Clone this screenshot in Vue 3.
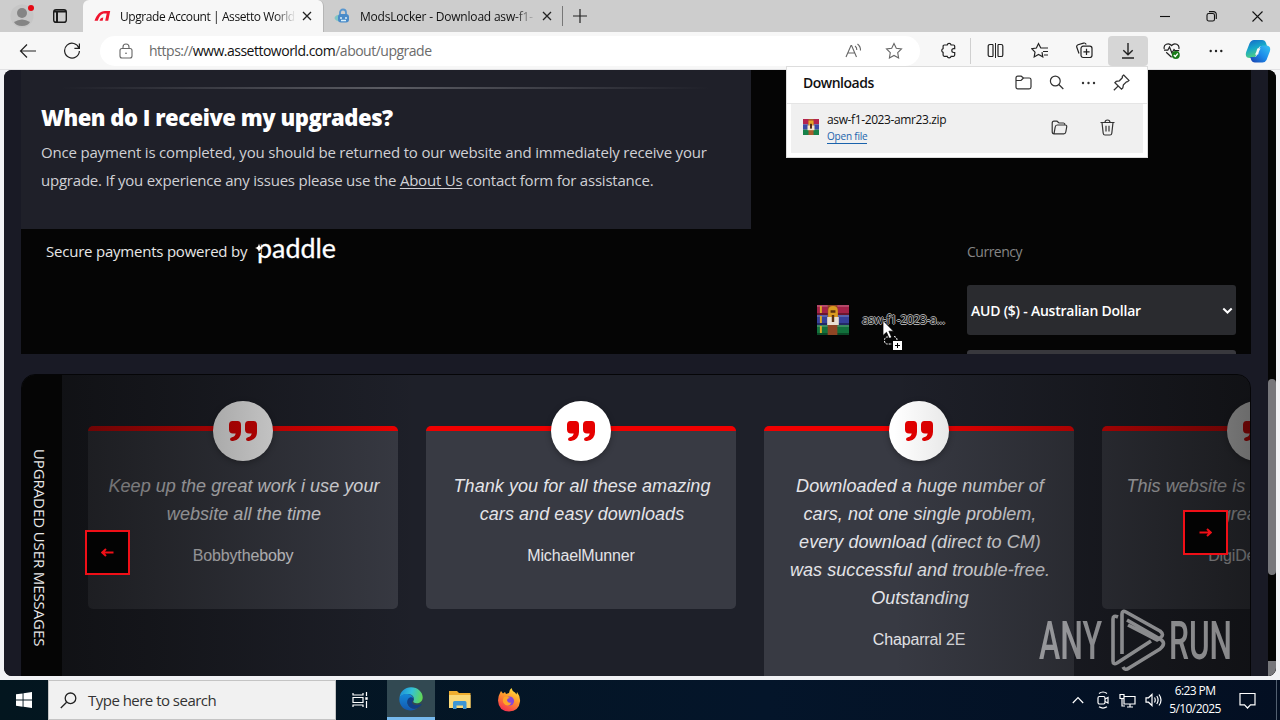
<script setup>
import { ref } from 'vue'

const testimonials = ref([
  { id: 1, lines: ['Keep up the great work i use your', 'website all the time'], name: 'Bobbytheboby' },
  { id: 2, lines: ['Thank you for all these amazing', 'cars and easy downloads'], name: 'MichaelMunner' },
  {
    id: 3,
    lines: [
      'Downloaded a huge number of',
      'cars, not one single problem,',
      'every download (direct to CM)',
      'was successful and trouble-free.',
      'Outstanding',
    ],
    name: 'Chaparral 2E',
  },
  { id: 4, lines: ['This website is the best and very', 'great site'], name: 'DigiDesigners' },
])
</script>

<template>
  <div class="screen">
    <header class="tab-strip">
      <div class="profile">
        <svg width="24" height="26" viewBox="0 0 24 26">
          <circle cx="12" cy="14" r="11.5" fill="#c6c6c6" />
          <circle cx="12" cy="11" r="5" fill="#858585" />
          <path d="M4 20q8-5 16 0q-2 4-8 4t-8-4" fill="#858585" />
        </svg>
        <i class="alert-dot"></i>
      </div>
      <div class="tab-actions">
        <svg width="16" height="16" viewBox="0 0 16 16" fill="none" stroke="#1b1b1b" stroke-width="1.4">
          <rect x="1.7" y="1.7" width="12.6" height="12.6" rx="2.4" />
          <path d="M2 3.5h12M5 4v10" stroke-width="2" />
        </svg>
      </div>
      <div class="tab active">
        <svg class="fav" width="17" height="16" viewBox="0 0 17 16">
          <path d="M.5 12.800C3 6.500 6 3 11 3h5.200l-2 9.800h-3l1.500-7.200h-2C7.500 5.600 5.500 8 3.800 12.800z" fill="#f0152f" />
          <path d="M5.500 12.800q1-3.300 3.800-3.300l-.6 3.300z" fill="#f0152f" />
        </svg>
        <span class="tab-title">Upgrade Account | Assetto World</span>
        <svg class="tab-close" width="10" height="10" viewBox="0 0 10 10"><path d="M1 1l8 8M9 1l-8 8" /></svg>
      </div>
      <div class="tab second">
        <svg class="fav" width="17" height="16" viewBox="0 0 17 16">
          <ellipse cx="7" cy="10" rx="6.5" ry="3.5" fill="#7fc6c5" />
          <path d="M6 7V4.5a3 3 0 0 1 6 0V7" fill="none" stroke="#5796cf" stroke-width="1.8" />
          <rect x="4" y="6" width="11" height="8.5" rx="3" fill="#4a8bc9" />
          <path d="M6 10h2m3 0h2M7 12.5h5" stroke="#d8eefa" stroke-width="1.3" />
        </svg>
        <span class="tab-title">ModsLocker - Download asw-f1-</span>
        <svg class="tab-close" width="10" height="10" viewBox="0 0 10 10"><path d="M1 1l8 8M9 1l-8 8" /></svg>
      </div>
      <div class="new-tab">
        <svg width="14" height="14" viewBox="0 0 14 14"><path d="M7 0v14M0 7h14" stroke="#222" stroke-width="1.2" /></svg>
      </div>
      <div class="window-buttons">
        <svg width="11" height="11" viewBox="0 0 11 11"><path d="M0 5.5h10" /></svg>
        <svg width="11" height="11" viewBox="0 0 11 11"><rect x="1" y="2.5" width="7.5" height="7.5" rx="1.8" /><path d="M3 .6h4.5a2.8 2.8 0 0 1 2.8 2.8V8" /></svg>
        <svg width="11" height="11" viewBox="0 0 11 11"><path d="M.5.5l10 10M10.5.5l-10 10" /></svg>
      </div>
    </header>

    <nav class="toolbar">
      <div class="nav-icon back">
        <svg width="18" height="16" viewBox="0 0 18 16"><path d="M17 8H1.500M8 1.500L1.500 8L8 14.500" /></svg>
      </div>
      <div class="nav-icon reload">
        <svg width="18" height="18" viewBox="0 0 18 18"><path d="M16 6.2A7.4 7.4 0 1 0 16.4 9M16.4 1.5v4.9h-5" /></svg>
      </div>
      <div class="address">
        <svg class="lock" width="14" height="16" viewBox="0 0 14 16"><rect x="1" y="5.5" width="12" height="9.5" rx="2" /><path d="M4 5.5V4a3 3 0 0 1 6 0v1.5" /><circle cx="7" cy="10.3" r=".8" fill="#555" stroke="none" /></svg>
        <span class="url">https://<b>www.assettoworld.com</b>/about/upgrade</span>
        <svg class="read" width="17" height="16" viewBox="0 0 17 16"><path d="M1 14L6 2.5h.6L11.5 14M2.8 10h7M10 3q2 1.5 1.8 4M12.5 1q3.2 2.5 3 6.5" /></svg>
        <svg class="star" width="18" height="18" viewBox="0 0 18 18"><path d="M9 1.5l2.3 4.8 5.2.7-3.8 3.7.9 5.2L9 13.4l-4.6 2.5.9-5.2L1.5 7l5.2-.7z" /></svg>
      </div>
      <div class="nav-icon ext">
        <svg width="17" height="17" viewBox="0 0 17 17"><path d="M4.300 3h2.900a2 2 0 0 1 3.900 0h2.400q1.200 0 1.200 1.200v2.500h-1a1.900 1.900 0 0 0 0 3.800h1v2.600q0 1.200-1.200 1.200h-2.400a2 2 0 0 1-3.900 0H4.300q-1.200 0-1.200-1.200v-2.700a2 2 0 0 1 0-3.800V4.200Q3.100 3 4.300 3z" /></svg>
      </div>
      <i class="tool-sep"></i>
      <div class="nav-icon split">
        <svg width="17" height="15" viewBox="0 0 17 15"><path d="M6 1.500H2.800A1.600 1.600 0 0 0 1.200 3.100v8.800a1.600 1.600 0 0 0 1.600 1.600H6M11 1.500h3.200a1.600 1.600 0 0 1 1.600 1.600v8.800a1.600 1.600 0 0 1-1.600 1.600H11M6 1.500v12M11 1.500v12" /><path d="M8.500 0v15" stroke-width="1" /></svg>
      </div>
      <div class="nav-icon">
        <svg width="18" height="17" viewBox="0 0 18 17"><path d="M11 10.200l.8 4.600-4.300-2.300-4.300 2.400.8-4.800L.8 6.700l4.600-.7 2.100-4.400L9.800 6H17M12 9.500h5M13 13h4" /></svg>
      </div>
      <div class="nav-icon">
        <svg width="18" height="17" viewBox="0 0 18 17"><path d="M4 11.5L1.8 5.3Q1.2 3.5 3 2.800l5.600-1.700q1.800-.5 2.600 1.400" /><rect x="6" y="4.200" width="11" height="11.3" rx="2.200" /><path d="M11.500 6.800v6.200M8.400 9.900h6.200" /></svg>
      </div>
      <div class="nav-icon download">
        <svg width="14" height="16" viewBox="0 0 14 16"><path d="M7 0v11.5M2.300 7.200L7 11.800l4.700-4.600M1 15h12" stroke-width="1.4" /></svg>
      </div>
      <div class="nav-icon health">
        <svg width="18" height="18" viewBox="0 0 18 18"><path d="M1.300 7C0 2.500 5.500 0 8.600 3.500C11.700 0 17 2.500 15.800 7M3.200 10.200l5.400 5M1 8.200h3.800L6.500 5l2.400 6L11 7.500l1 1.200h4.200" /><circle cx="12.800" cy="13" r="4" fill="#187a17" stroke="none" /><path d="M10.800 13l1.500 1.500 2.500-3" stroke="#fff" /></svg>
      </div>
      <div class="nav-icon more">
        <svg width="14" height="4" viewBox="0 0 14 4"><g fill="#222" stroke="none"><circle cx="1.700" cy="2" r="1.200" /><circle cx="7" cy="2" r="1.200" /><circle cx="12.300" cy="2" r="1.200" /></g></svg>
      </div>
      <div class="nav-icon copilot">
        <svg width="26" height="24" viewBox="0 0 26 24">
          <defs>
            <linearGradient id="cop-a" x1="0" y1="0" x2=".4" y2="1"><stop offset="0" stop-color="#1762c8" /><stop offset=".5" stop-color="#16a6ca" /><stop offset="1" stop-color="#55d37c" /></linearGradient>
            <linearGradient id="cop-b" x1="0" y1="1" x2="1" y2="0"><stop offset="0" stop-color="#1a3fae" /><stop offset=".5" stop-color="#1c8bea" /><stop offset="1" stop-color="#37c5f1" /></linearGradient>
          </defs>
          <path d="M9 1h8q3 0 4 3l1 3h-5q-3 0-3.800 2.500L11 16.500Q10 19 7.500 19H5Q-.5 19 1.200 13L4.500 4.500Q6 1 9 1z" fill="url(#cop-a)" stroke="none" />
          <path d="M17.500 6.500H21q5.500 0 3.800 6l-3.300 8.500Q20 23.500 17.500 23.500H10q-3 0-4-3L5.300 18H9q2.500 0 3.300-2.500l2.200-6.500q.8-2.500 3-2.500z" fill="url(#cop-b)" stroke="none" />
          <path d="M12.300 9.500h3.300q-1.200 1.500-1.800 3.500l-.6 2.500H9.800q1-1 1.500-2.800z" fill="#f7f7f7" stroke="none" />
        </svg>
      </div>
    </nav>

    <div class="viewport">
      <main class="page">
        <section class="upgrade">
          <div class="upgrade-left">
            <article class="faq">
              <hr />
              <h2>When do I receive my upgrades?</h2>
              <p class="first">Once payment is completed, you should be returned to our website and immediately receive your</p>
              <p>upgrade. If you experience any issues please use the <a>About Us</a> contact form for assistance.</p>
            </article>
            <div class="secure">
              <span>Secure payments powered by</span>
              <svg width="84" height="32" viewBox="0 0 84 32">
                <text x="2" y="22" textLength="79" lengthAdjust="spacingAndGlyphs" class="paddle">paddle</text>
                <rect x="0" y="5" width="5.800" height="12" fill="#050505" />
                <path d="M4 7.500q.6 4 4.500 4.500q-3.900.5-4.500 4.500q-.6-4-4-4.500q3.400-.5 4-4.500z" fill="#fff" />
              </svg>
            </div>
          </div>
          <aside class="checkout">
            <label>Currency</label>
            <div class="select">
              <span>AUD ($) - Australian Dollar</span>
              <svg width="11" height="8" viewBox="0 0 11 8"><path d="M1.300 1.500l4.200 4 4.200-4" fill="none" stroke="#fff" stroke-width="2" /></svg>
            </div>
            <div class="select next"></div>
          </aside>
        </section>

        <section class="messages">
          <div class="rail"><span>UPGRADED USER MESSAGES</span></div>
          <div class="carousel">
            <div class="track">
              <article v-for="item in testimonials" :key="item.id" class="card">
                <div class="quote">
                  <svg width="30" height="22" viewBox="0 0 30 22" fill="#e60000">
                    <path d="M4.500 1h5Q13 1 13 5v7q0 7.500-8 9-3 .5-3-1.700 0-1.500 2-2 3.200-.8 3.700-3.800H5Q1 13.500 1 9.500V5q0-4 3.500-4zM20.500 1h5Q29 1 29 5v7q0 7.500-8 9-3 .5-3-1.700 0-1.500 2-2 3.200-.8 3.700-3.800H21q-4 0-4-4V5q0-4 3.500-4z" />
                  </svg>
                </div>
                <p v-for="line in item.lines" :key="line" class="line">{{ line }}</p>
                <p class="author">{{ item.name }}</p>
              </article>
            </div>
            <button class="arrow prev"><svg width="13" height="9" viewBox="0 0 13 9"><path d="M12.500 4.500h-11M5 1L1.300 4.500 5 8" /></svg></button>
            <button class="arrow following"><svg width="13" height="9" viewBox="0 0 13 9"><path d="M.5 4.500h11M8 1l3.700 3.500L8 8" /></svg></button>
          </div>
        </section>
      </main>
      <div class="scrollbar"><i class="thumb"></i><i class="corner"></i></div>
    </div>

    <footer class="taskbar">
      <div class="start">
        <svg width="16" height="16" viewBox="0 0 16 16" fill="#fff"><path d="M0 2.300L6.600 1.400v6.200H0zM7.500 1.300L16 0v7.600H7.500zM0 8.500h6.600v6.200L0 13.800zM7.500 8.500H16V16l-8.500-1.200z" /></svg>
      </div>
      <div class="search">
        <svg width="17" height="17" viewBox="0 0 17 17" fill="none" stroke="#222" stroke-width="1.300"><circle cx="10.500" cy="6.300" r="5.300" /><path d="M6.600 10.200L.8 16" /></svg>
        <span>Type here to search</span>
      </div>
      <div class="task">
        <svg width="17" height="16" viewBox="0 0 17 16" fill="none" stroke="#fff" stroke-width="1.200"><path d="M1 1v2h10V1M1 15v-2h10v2M1 5.500h10v5H1zM14.500 0v4M14.500 9v7" /><path d="M13.300 6.500h2.400" stroke-width="2.600" /></svg>
      </div>
      <div class="task edge">
        <svg width="24" height="24" viewBox="0 0 24 24">
          <defs>
            <linearGradient id="edge-a" x1="0" y1=".3" x2="1" y2=".5"><stop offset="0" stop-color="#1c8fd8" /><stop offset=".5" stop-color="#34c1d8" /><stop offset="1" stop-color="#62d854" /></linearGradient>
            <linearGradient id="edge-b" x1="0" y1="0" x2="0" y2="1"><stop offset="0" stop-color="#1488d8" /><stop offset="1" stop-color="#1458b0" /></linearGradient>
          </defs>
          <path d="M.5 11C1 4.500 6 .3 12 .3c7 0 11.700 5 11.700 10 0 4-3 6-6 6-2.500 0-4-1-3.300-2.200C16 11 14 7 9 7 5 7 2 8.500.5 11z" fill="url(#edge-a)" />
          <path d="M.3 12C1 8 5 6.500 8.500 7c4 .3 6.500 3 6 5.500C13 10 8.500 11 8.500 15.500c0 4 4.500 7.800 10 5.500C13 26 .3 23.500.3 12z" fill="url(#edge-b)" />
          <path d="M11 10.500c-3 1-3.500 5-1.500 8 2.700 4 8.500 4.500 12.800-.5.500-.7 0-1.200-.8-.8-4 2-8 .8-8.500-1.700-.3-1.500 1.500-1.600 1.500-3.300 0-1.500-1.800-2.300-3.500-1.700z" fill="#123f87" />
        </svg>
      </div>
      <div class="task explorer">
        <svg width="22" height="20" viewBox="0 0 22 20"><path d="M0 1h8l2 2h11.500v15H0z" fill="#f0ae2f" /><path d="M0 5h21.500v13H0z" fill="#fbd978" /><path d="M4 19v-6.500Q4 11 5.500 11h10.500q1.500 0 1.500 1.500V19h-3.500v-3.500h-6.500V19z" fill="#3e96d4" /></svg>
      </div>
      <div class="task">
        <svg width="24" height="24" viewBox="0 0 24 24">
          <defs><linearGradient id="fox" x1=".8" y1="0" x2=".3" y2="1"><stop offset="0" stop-color="#ffe83f" /><stop offset=".45" stop-color="#ff982b" /><stop offset="1" stop-color="#f52e50" /></linearGradient></defs>
          <path d="M3 5l1-2 2 2.500 2-1.500 1 2 3-1q0-3 2.500-5Q15 3 18 4.500l1.500 2L20 4q3.500 4.500 3 9.500-1 9.500-11 10-10.500-.5-11-11Q1 8 3 5z" fill="url(#fox)" />
          <circle cx="12.500" cy="13" r="4.600" fill="#8547d8" /><path d="M7 9q3-1.500 6 1-3 0-3 2.500 1 3 4.500 2-2 4-6 2.500Q4 14 7 9z" fill="#ffa528" />
        </svg>
      </div>
      <div class="tray">
        <svg class="chevron" width="12" height="8" viewBox="0 0 12 8"><path d="M.8 7L6 1.500 11.200 7" /></svg>
        <svg width="14" height="18" viewBox="0 0 14 18"><rect x="2" y="5.500" width="7" height="7.500" rx="1.500" /><path d="M9 8l3-1.500v5.500L9 10.500M3 2.500q4-3 8 0M3 15.800q4 2.500 8 0" /></svg>
        <svg width="17" height="15" viewBox="0 0 17 15"><path d="M5 3.500h11v7.500H5zM8 14h6M11 11v3M1 1.500h4v4H1zM3 5.500V13h3" /></svg>
        <svg width="17" height="14" viewBox="0 0 17 14"><path d="M1 4.800h2.500L7 1.500v11L3.500 9.200H1zM9.500 4.500q1.500 2.500 0 5M11.800 3q2.600 4 0 8M14 1.500q4 5.500 0 11" /></svg>
        <div class="clock"><span>6:23 PM</span><span>5/10/2025</span></div>
        <svg class="notice" width="17" height="17" viewBox="0 0 17 17"><path d="M1 1.500h15v11.300h-4.500L8.500 16l-3-3.200H1z" /></svg>
        <i class="peek"></i>
      </div>
    </footer>

    <section class="downloads">
      <header>
        <strong>Downloads</strong>
        <svg width="17" height="15" viewBox="0 0 17 15"><path d="M1 12V3q0-1.800 1.800-1.800h3.400L8.500 3h5.700Q16 3 16 4.800V12q0 1.800-1.800 1.800H2.800Q1 13.800 1 12zM1 5.500h5L8.500 3" /></svg>
        <svg width="15" height="15" viewBox="0 0 15 15"><circle cx="6.300" cy="6" r="4.900" /><path d="M9.800 9.500l4.500 4.500" /></svg>
        <svg width="15" height="4" viewBox="0 0 15 4"><g fill="#333" stroke="none"><circle cx="2" cy="2" r="1.200" /><circle cx="7.500" cy="2" r="1.200" /><circle cx="13" cy="2" r="1.200" /></g></svg>
        <svg width="17" height="17" viewBox="0 0 16 16"><path d="M10 1l5 5-1.300 1.200-1 .1-2.900 2.900-.6 3-1.200 1.100L1.800 8.200 3 7l3-.6L8.800 3.500V2.200zM5 11.200L.8 15.300" /></svg>
      </header>
      <div class="file">
        <svg class="rar" width="16" height="16" viewBox="0 0 32 30" preserveAspectRatio="none">
          <rect width="32" height="10" fill="#b5234f" /><rect y="10" width="32" height="10" fill="#3b4ba8" /><rect y="20" width="32" height="10" fill="#17824a" />
          <rect x="11" width="10" height="30" fill="#ad5a2d" /><rect x="11" y="3" width="10" height="9" fill="#e7a52a" /><rect x="9" y="12" width="14" height="9" fill="#f4e6cc" /><rect x="14" y="9" width="4" height="9" fill="#5a2d18" />
        </svg>
        <div class="file-info"><span>asw-f1-2023-amr23.zip</span><a>Open file</a></div>
        <svg width="17" height="15" viewBox="0 0 17 15"><path d="M3 13.800q-1.800 0-1.800-2V3q0-1.800 1.800-1.800h3L8 3h4.500Q14 3 14 5M3 13.800L4.200 7q.3-2 2-2h8Q16 5 15.700 7l-.9 5q-.3 1.800-2 1.800z" /></svg>
        <svg class="bin" width="15" height="17" viewBox="0 0 15 17"><path d="M.5 3.500h14M5 3.500q0-2.500 2.500-2.500T10 3.500M2 3.500l1.200 10.800q.2 1.700 1.800 1.700h5q1.600 0 1.800-1.700L13 3.500M6 6.800v5.800M9 6.800v5.800" /></svg>
      </div>
    </section>

    <div class="drag">
      <svg width="32" height="30" viewBox="0 0 33 30" preserveAspectRatio="none">
        <rect width="33" height="10" fill="#a32248" /><rect y="10" width="33" height="10" fill="#35409a" /><rect y="20" width="33" height="10" fill="#12713c" />
        <path d="M0 1h33M0 11h33M0 21h33" stroke="#fff" stroke-opacity=".18" stroke-width="2" />
        <path d="M0 9h33M0 19h33M0 29h33" stroke="#000" stroke-opacity=".35" stroke-width="2" />
        <path d="M4 1v7M4 11v7M4 21v7" stroke="#dda827" stroke-width="2" />
        <rect x="11" width="10" height="30" fill="#8f4524" />
        <path d="M11.500 12V6q0-5 5-5t5 5v6z" fill="#d99a20" /><rect x="10.500" y="12" width="12" height="8" fill="#e8dfd2" />
        <path d="M14 6.500h5M16.500 10v7" stroke="#5a3010" stroke-width="2.500" />
      </svg>
      <span>asw-f1-2023-a...</span>
      <svg class="cursor" width="22" height="30" viewBox="0 0 22 30">
        <path d="M1 .5v15l3.500-3.200L7 18l2.500-1-2.600-5.800h4.600z" fill="#fff" stroke="#000" stroke-width=".7" />
        <path d="M9 17H5.500q-3 0-3 3.500t3 3.500H10M12 16.500q3 .5 3 3.500" fill="none" stroke="#fff" stroke-width="1" stroke-dasharray="2 1" />
        <rect x="11" y="21" width="9" height="9" fill="#fff" /><path d="M15.500 23v5M13 25.500h5" stroke="#000" />
      </svg>
    </div>

    <svg class="watermark" width="194" height="64" viewBox="0 0 194 64">
      <text x="0" y="50" textLength="63" lengthAdjust="spacingAndGlyphs">ANY</text>
      <text x="130" y="50" textLength="63" lengthAdjust="spacingAndGlyphs">RUN</text>
      <path d="M79 8q-5-2-5 2v42q0 4 4 2l34-22M83 45V5q0-4 4-2l34 19q5 4 0 7l-3 2L89 16M84 58q2 4 6 1l31-19q7-6 0-10L88 11" />
    </svg>
  </div>
</template>

<style>
body {
  margin: 0;
}
</style>

<style scoped>
.screen {
  position: relative;
  width: 1280px;
  height: 720px;
  overflow: hidden;
  display: flex;
  flex-direction: column;
  background: #f1f2f5;
  font-family: 'Open Sans', 'Noto Sans', sans-serif;
  color: #111;
}

.screen * {
  box-sizing: border-box;
}

svg {
  flex: none;
  display: block;
}

.tab-strip {
  display: flex;
  height: 32px;
  background: #cdcdcd;
}

.profile {
  position: relative;
  width: 44px;
  padding: 2px 0 0 10px;
}

.alert-dot {
  position: absolute;
  left: 28px;
  top: 5px;
  width: 6px;
  height: 6px;
  border-radius: 50%;
  background: #e50914;
}

.tab-actions {
  width: 39px;
  padding: 8px 0 0 8px;
}

.tab {
  display: flex;
  align-items: center;
  width: 238px;
  padding: 0 10px;
  font-size: 12px;
  background: #cdcdcd;
}

.tab.active {
  width: 241px;
  padding-left: 11px;
  background: #f7f7f7;
  border-right: 1px solid #b5b5b5;
  border-radius: 6px 6px 0 0;
}

.tab-title {
  width: 176px;
  margin-left: 9px;
  overflow: hidden;
  white-space: nowrap;
  letter-spacing: -0.42px;
  -webkit-mask-image: linear-gradient(90deg, #000 88%, transparent);
  mask-image: linear-gradient(90deg, #000 88%, transparent);
}

.second .tab-title {
  letter-spacing: -0.2px;
}

.tab-close {
  margin-left: 6px;
  stroke: #222;
  stroke-width: 1.3;
}

.new-tab {
  height: 20px;
  margin-top: 6px;
  padding: 3px 0 0 10px;
  border-left: 1px solid #777;
}

.window-buttons {
  display: flex;
  gap: 35px;
  margin-left: auto;
  padding: 11px 17px 0 0;
  fill: none;
  stroke: #111;
  stroke-width: 1.1;
}

.toolbar {
  display: flex;
  align-items: center;
  height: 38px;
  background: #f7f7f7;
  border-bottom: 1px solid #e2e2e4;
}

.nav-icon {
  display: flex;
  align-items: center;
  justify-content: center;
  width: 44px;
  height: 30px;
  fill: none;
  stroke: #222;
  stroke-width: 1.2;
}

.back {
  width: 56px;
}

.reload {
  width: 32px;
}

.address {
  display: flex;
  align-items: center;
  width: 820px;
  height: 30px;
  margin-left: 12px;
  padding: 0 17px 0 19px;
  border-radius: 15px;
  background: #fff;
  fill: none;
  stroke: #666;
  stroke-width: 1.1;
}

.url {
  margin-left: 16px;
  font-size: 14px;
  color: #6b6b6b;
  letter-spacing: -0.5px;
}

.url b {
  font-weight: 400;
  color: #111;
}

.read {
  margin-left: auto;
}

.star {
  margin-left: 23px;
}

.ext {
  margin-left: 6px;
}

.tool-sep {
  width: 2px;
  height: 26px;
  border-left: 1px solid #d0d0d0;
}

.split {
  width: 46px;
}

.download {
  width: 40px;
  margin-left: 2px;
  border-radius: 4px;
  background: #d6d6d6;
}

.health {
  width: 48px;
}

.more {
  width: 40px;
}

.copilot {
  width: 43px;
}

.viewport {
  display: flex;
  height: 606px;
  margin: 0 4px 4px;
  border-radius: 8px;
  overflow: hidden;
  background: #050505;
}

.page {
  width: 1264px;
  padding: 0 17px;
  background: #191a25;
}

.upgrade {
  display: flex;
  justify-content: space-between;
  width: 1230px;
  height: 284px;
  padding-right: 15px;
  overflow: hidden;
  background: #050505;
}

.faq {
  width: 730px;
  height: 159px;
  padding: 17px 20px 0;
  background: #1f2029;
}

.faq hr {
  height: 2px;
  margin: 0;
  border: 0;
  background: linear-gradient(90deg, transparent 3%, #5b5c63 50%, transparent 97%);
}

.faq h2 {
  margin: 11px 0 4px;
  font-size: 22px;
  line-height: 34px;
  font-weight: 800;
  letter-spacing: -0.47px;
  color: #fff;
  white-space: nowrap;
}

.faq p {
  margin: 0;
  line-height: 28px;
  font-size: 15px;
  color: #d0d0d5;
  letter-spacing: -0.22px;
  white-space: nowrap;
}

.faq .first {
  letter-spacing: -0.18px;
}

.faq a {
  text-decoration: underline;
  text-underline-offset: 2px;
}

.secure {
  display: flex;
  align-items: center;
  height: 46px;
  padding-left: 25px;
  font-size: 15px;
  letter-spacing: -0.22px;
  color: #e7e7e7;
  white-space: nowrap;
}

.secure span {
  margin-top: -2px;
}

.secure svg {
  margin-left: 8px;
}

.paddle {
  font: 400 27px Lato, sans-serif;
  letter-spacing: 0;
  fill: #fff;
  stroke: #fff;
  stroke-width: 0.3;
}

.checkout {
  width: 269px;
  padding-top: 168px;
}

.checkout label {
  display: block;
  height: 28px;
  margin-bottom: 19px;
  line-height: 28px;
  font-size: 14px;
  letter-spacing: -0.5px;
  color: #858585;
}

.select {
  display: flex;
  align-items: center;
  justify-content: space-between;
  height: 50px;
  padding: 1px 3px 0 4px;
  border-radius: 3px;
  background: #2a2b2f;
  color: #fff;
  font-size: 14px;
  font-weight: 600;
  letter-spacing: -0.23px;
}

.select.next {
  margin-top: 15px;
  background: #38383d;
}

.messages {
  display: flex;
  width: 1230px;
  height: 320px;
  margin-top: 20px;
  border: 1px solid #050507;
  border-radius: 14px;
  overflow: hidden;
  background: #1e2029;
}

.rail {
  flex: none;
  display: flex;
  justify-content: center;
  width: 40px;
  padding-top: 74px;
  background: #050505;
  color: #e7e7e7;
  font-size: 15px;
  letter-spacing: -0.1px;
}

.rail span {
  writing-mode: vertical-rl;
  line-height: 20px;
  white-space: nowrap;
  margin-right: 4px;
}

.carousel {
  position: relative;
  flex: 1;
  min-width: 0;
  padding: 51px 0 0 26px;
  overflow: hidden;
}

.carousel::after {
  content: '';
  position: absolute;
  inset: 0;
  background: linear-gradient(90deg, rgba(8, 8, 8, 0.6), transparent 30%, transparent 70%, rgba(8, 8, 8, 0.6));
}

.track {
  display: flex;
  align-items: flex-start;
  gap: 28px;
}

.card {
  position: relative;
  flex: none;
  width: 310px;
  padding: 41px 0 39px;
  border-top: 5px solid #f00000;
  border-radius: 5px;
  background: #383a43;
  font-family: 'Liberation Sans', Arial, sans-serif;
  text-align: center;
}

.quote {
  position: absolute;
  left: 125px;
  top: -30px;
  display: flex;
  align-items: center;
  justify-content: center;
  width: 60px;
  height: 60px;
  border-radius: 50%;
  background: #fff;
  box-shadow: 0 2px 6px rgba(0, 0, 0, 0.3);
}

.line {
  margin: 0;
  padding-left: 2px;
  font-size: 18px;
  line-height: 28px;
  font-style: italic;
  letter-spacing: 0.06px;
  white-space: nowrap;
  color: #e4e4e8;
}

.author {
  margin: 14px 0 0;
  font-size: 16px;
  line-height: 28px;
  letter-spacing: -0.15px;
  color: #e4e4e8;
}

.arrow {
  position: absolute;
  z-index: 2;
  display: flex;
  align-items: center;
  justify-content: center;
  width: 45px;
  height: 45px;
  padding: 0;
  border: 2px solid #f00f17;
  background: #030303;
  fill: none;
  stroke: #f00f17;
  stroke-width: 2;
}

.prev {
  left: 23px;
  top: 155px;
}

.following {
  left: 1121px;
  top: 135px;
}

.scrollbar {
  position: relative;
  width: 8px;
  background: #050505;
}

.thumb {
  position: absolute;
  top: 309px;
  left: 0;
  width: 8px;
  height: 196px;
  border-radius: 4px;
  background: #77777b;
}

.corner {
  position: absolute;
  bottom: 0;
  width: 8px;
  height: 15px;
  background: #77777b;
}

.taskbar {
  display: flex;
  height: 40px;
  background: linear-gradient(90deg, #03161f, #04152a 60%, #030f22);
}

.start,
.task {
  display: flex;
  align-items: center;
  justify-content: center;
  width: 48px;
}

.search {
  display: flex;
  align-items: center;
  width: 288px;
  padding-left: 11px;
  border: 1px solid #c4c4c4;
  background: #f1f1f1;
  color: #333;
  font-size: 15px;
  letter-spacing: -0.52px;
}

.search span {
  margin-left: 11px;
}

.edge {
  margin: 0 1px 0 3px;
  background: #324952;
  border-bottom: 3px solid #76b9ed;
}

.explorer {
  margin-right: 1px;
}

.tray {
  display: flex;
  align-items: center;
  margin-left: auto;
  gap: 9px;
  fill: none;
  stroke: #fff;
  stroke-width: 1.2;
}

.chevron {
  margin-right: 3px;
}

.clock {
  display: flex;
  flex-direction: column;
  align-items: center;
  width: 62px;
  margin-left: -7px;
  font-size: 12px;
  line-height: 18px;
  letter-spacing: -0.6px;
  color: #fff;
}

.notice {
  margin-left: 4px;
}

.peek {
  width: 4px;
  height: 40px;
  margin-left: 11px;
  border-left: 1px solid #526070;
}

.downloads {
  position: absolute;
  left: 786px;
  top: 66px;
  width: 362px;
  height: 92px;
  border: 1px solid #ddd;
  background: #fff;
}

.downloads svg {
  fill: none;
  stroke: #333;
  stroke-width: 1.2;
}

.downloads header {
  display: flex;
  align-items: center;
  height: 37px;
  padding: 0 17px 5px 16px;
  gap: 17px;
  border-bottom: 1px solid #e5e5e5;
}

.downloads strong {
  flex: 1;
  font-size: 14px;
  font-weight: 600;
  letter-spacing: -0.5px;
}

.file {
  display: flex;
  align-items: center;
  height: 49px;
  margin: 0 4px;
  padding: 0 28px 3px 12px;
  background: #f0f0f0;
}

.downloads .rar {
  stroke: none;
}

.file-info {
  display: flex;
  flex-direction: column;
  align-items: flex-start;
  flex: 1;
  margin-left: 8px;
  font-size: 12px;
  line-height: 17px;
  letter-spacing: -0.38px;
}

.file-info a {
  font-size: 10px;
  line-height: 14px;
  margin-top: 1px;
  letter-spacing: -0.2px;
  color: #1a63ac;
  border-bottom: 1px solid #1a63ac;
}

.bin {
  margin-left: 32px;
}

.drag {
  position: absolute;
  left: 817px;
  top: 305px;
  display: flex;
  align-items: center;
  height: 30px;
  font-size: 12px;
  letter-spacing: -0.3px;
  color: #050505;
  text-shadow: 1px 0 #aaa, -1px 0 #aaa, 0 1px #aaa, 0 -1px #aaa;
}

.drag span {
  margin: -1px 0 0 13px;
}

.cursor {
  position: absolute;
  left: 65px;
  top: 15px;
}

.watermark {
  position: absolute;
  left: 1039px;
  top: 609px;
  opacity: 0.5;
  fill: #fff;
}

.watermark text {
  font: 500 53px Roboto, sans-serif;
}

.watermark path {
  fill: none;
  stroke: #fff;
  stroke-width: 3.6;
  stroke-linejoin: round;
}
</style>
